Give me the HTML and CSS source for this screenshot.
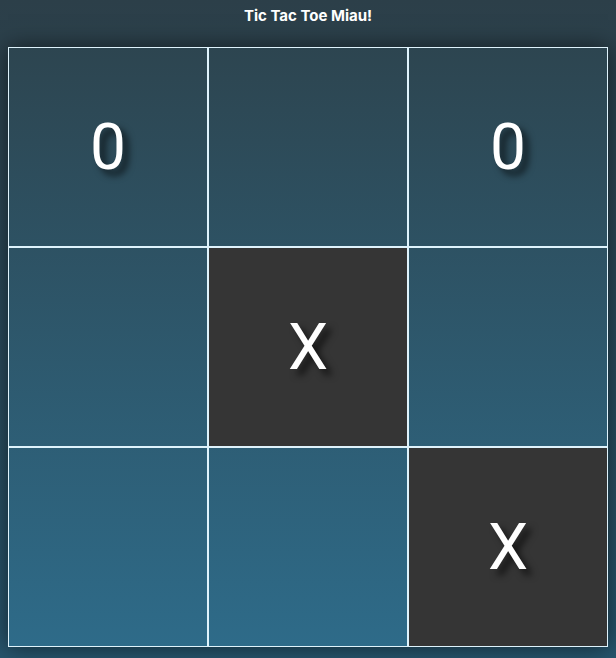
FILE: index.html
```html
<!DOCTYPE html>
<html lang="en">
<head>
    <meta charset="UTF-8">
    <meta name="viewport" content="width=device-width, initial-scale=1.0">
    <title>Tic Tac Toe Miau!</title>
    <link rel="stylesheet" href="styles.css">
</head>
<body>

    <h1 class="title">Tic Tac Toe Miau!</h1>

    <div class="board">
        <div class="cell">0</div>
        <div class="cell"></div>
        <div class="cell">0</div>
        <div class="cell"></div>
        <div class="cell cell-x">X</div>
        <div class="cell"></div>
        <div class="cell"></div>
        <div class="cell"></div>
        <div class="cell cell-x">X</div>
    </div>

</body>
</html>
```

FILE: styles.css
```css
* {
    margin: 0;
    padding: 0;
    box-sizing: border-box;
}
body {
    font-family: Inter, "Open Sans", sans-serif;
    color: #fff;
    padding: 0 8px;
    height: 658px;
    overflow: hidden;
    background: linear-gradient(#2c3f49, #27556d);
}
.title {
    height: 47px;
    padding-top: 6px;
    font-size: 15px;
    font-weight: 700;
    text-align: center;
    line-height: 20px;
}
.board {
    display: grid;
    grid-template-columns: repeat(3, 200px);
    grid-template-rows: repeat(3, 200px);
    width: 600px;
    background: linear-gradient(#2d4550, #2e6b89);
    box-shadow: 0 0 22px rgba(0, 0, 0, 0.55);
}
.cell {
    display: flex;
    align-items: center;
    justify-content: center;
    border: 1px solid #dff3fc;
    font-family: Roboto, sans-serif;
    font-size: 64px;
    text-shadow: 6px 6px 7px rgba(0, 0, 0, 0.65);
}
.cell-x {
    background-color: #353535;
}
```
